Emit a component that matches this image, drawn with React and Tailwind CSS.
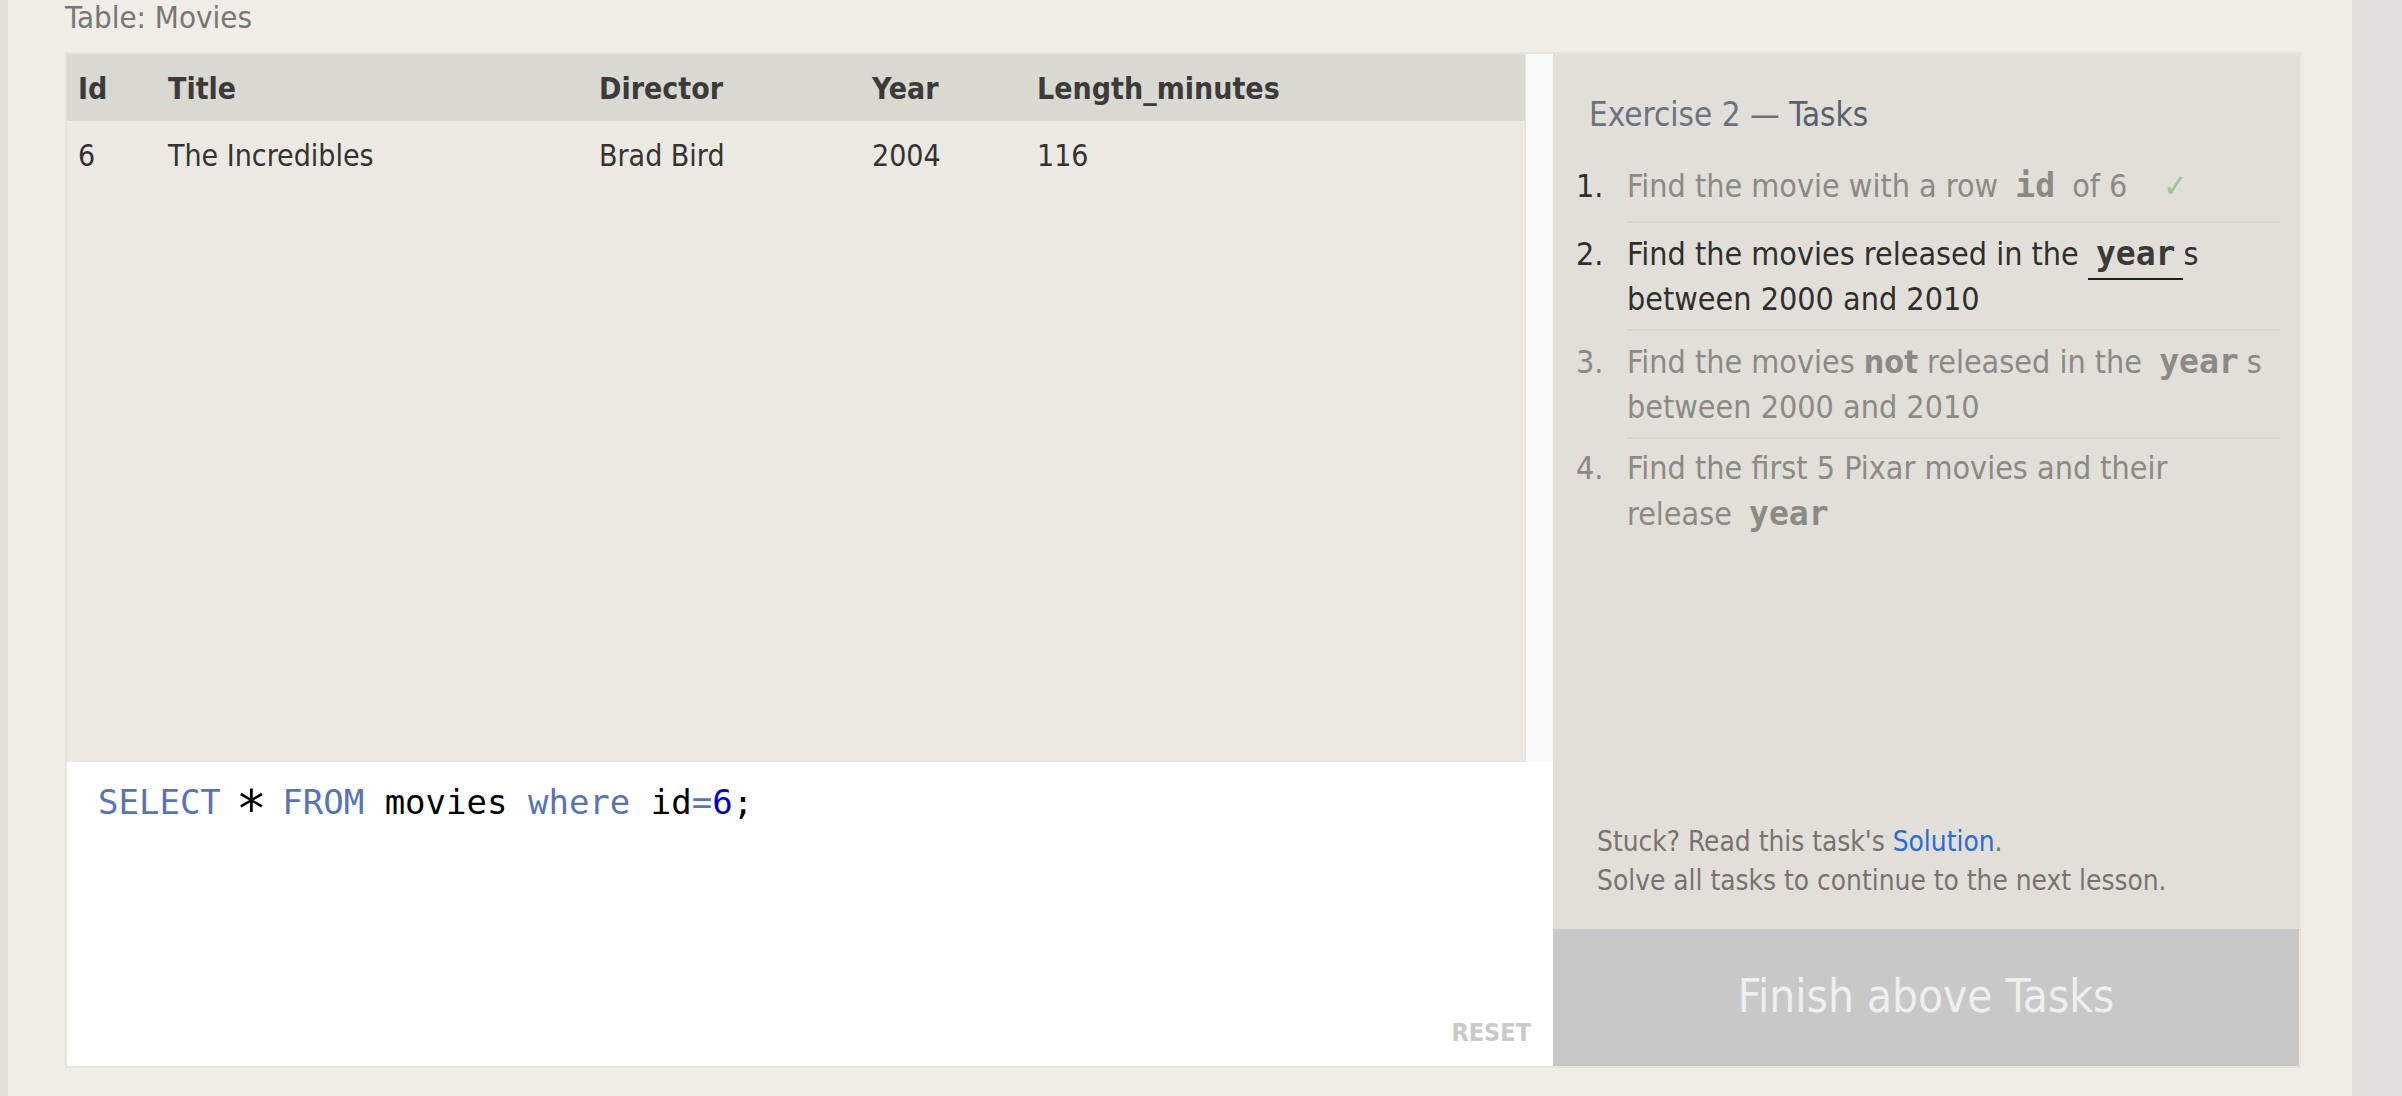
const sans = "font-['DejaVu_Sans_Condensed','DejaVu_Sans',sans-serif]";
const mono = "font-['DejaVu_Sans_Mono',monospace]";

const COLS = 'grid grid-cols-[90px_431px_273px_165px_1fr]';
const HEAD = ['Id', 'Title', 'Director', 'Year', 'Length_minutes'];
const ROWS = [['6', 'The Incredibles', 'Brad Bird', '2004', '116']];

function Code({ children, active }) {
  return (
    <code
      className={
        mono +
        ' font-bold text-[33px] leading-[51px] px-[8px] ' +
        (active ? 'text-[#3a3a3a] border-b-2 border-[#1f1f1f] pb-[5px]' : 'text-[#8b8a85]')
      }
    >
      {children}
    </code>
  );
}

function Task({ n, dark, last, top = 'pt-[5px]', children }) {
  return (
    <li className="flex items-baseline">
      <span className={'w-[51px] shrink-0 leading-[40px] ' + (dark ? 'text-[#2f2f2f]' : 'text-[#8b8a85]')}>
        {n}.
      </span>
      <div
        className={
          'flex-1 pb-[10px] leading-[40px] whitespace-nowrap ' +
          top +
          (last ? '' : ' border-b-2 border-[#d7d5cb]')
        }
      >
        {children}
      </div>
    </li>
  );
}

export default function App() {
  return (
    <div className={sans + ' w-full h-[1096px] overflow-hidden bg-[#e3e0dc]'}>
      <div className="ml-[8px] w-[2344px] h-full bg-[#efede6] pl-[57px] pr-[51px]">
        <div className="text-[31px] leading-[35px] text-[#777] mb-[17px]">Table: Movies</div>

        <div className="flex">
          {/* left: result table + editor */}
          <div className="w-[1488px] h-[1016px] flex flex-col border-2 border-r-0 border-[#e5e3dc]">
            <div className="flex h-[708px]">
              <div className="flex-1 flex flex-col bg-[#ebe9e2]">
                <div className={COLS + ' bg-[#dad9d1] h-[67px] pt-[4px] leading-[62px] text-[30px] font-bold text-[#3b3b3b]'}>
                  {HEAD.map((h) => (
                    <div key={h} className="pl-[11px]">{h}</div>
                  ))}
                </div>
                {ROWS.map((r) => (
                  <div key={r[0]} className={COLS + ' pt-[4px] leading-[62px] text-[30px] text-[#333]'}>
                    {r.map((c, i) => (
                      <div key={i} className="pl-[11px]">{c}</div>
                    ))}
                  </div>
                ))}
              </div>
              <div className="w-[28px] bg-[#f9f9f9] border-l border-[#e2e2e2]" />
            </div>

            <div className="flex-1 bg-white flex flex-col justify-between pt-[20px] pl-[31px] pr-[22px] pb-[19px]">
              <div className={mono + ' text-[34px] leading-[40px] text-black whitespace-pre'}>
                <span className="text-[#5874b4]">SELECT</span>{' '}
                <span className="inline-block w-[1ch] text-center scale-150 translate-y-[7px]">*</span>{' '}
                <span className="text-[#5874b4]">FROM</span> movies{' '}
                <span className="text-[#5874b4]">where</span> id<span className="text-[#5874b4]">=</span>
                <span className="text-[#0000cc]">6</span>;
              </div>
              <div className="self-end text-[25px] leading-[28px] font-bold text-[#c9c9c9]">RESET</div>
            </div>
          </div>

          {/* right: tasks panel */}
          <div className="w-[748px] h-[1016px] border-2 border-l-0 border-[#e5e3dc] bg-[#e1dfd8] flex flex-col">
            <div className="pt-[43px] pl-[36px] text-[33px] leading-[36px] text-[#6b7282] mb-[22px]">
              Exercise 2 — <span className="text-[#596072]">Tasks</span>
            </div>

            <ol className="pl-[23px] pr-[19px] text-[32px]">
              <Task n={1} dark>
                <span className="text-[#8b8a85]">
                  Find the movie with a row <Code>id</Code> of 6
                  <span className="ml-[36px] text-[#8fcb8f]">✓</span>
                </span>
              </Task>
              <Task n={2} dark>
                <span className="text-[#2f2f2f]">
                  Find the movies released in the <Code active>year</Code>s
                  <br />
                  between 2000 and 2010
                </span>
              </Task>
              <Task n={3}>
                <span className="text-[#8b8a85]">
                  Find the movies <b>not</b> released in the <Code>year</Code>s
                  <br />
                  between 2000 and 2010
                </span>
              </Task>
              <Task n={4} last top="pt-[9px]">
                <span className="text-[#8b8a85]">
                  Find the first 5 Pixar movies and their
                  <br />
                  release <Code>year</Code>
                </span>
              </Task>
            </ol>

            <div className="mt-auto pl-[44px] pb-[29px] text-[27.8px] leading-[39px] text-[#787370]">
              <div>
                Stuck? Read this task's <span className="text-[#2a6bd6]">Solution</span>.
              </div>
              <div>Solve all tasks to continue to the next lesson.</div>
            </div>

            <div className="h-[137px] bg-[#c8c8c8] flex items-center justify-center text-[45.5px] text-[#efefef]">
              Finish above Tasks
            </div>
          </div>
        </div>
      </div>
    </div>
  );
}
